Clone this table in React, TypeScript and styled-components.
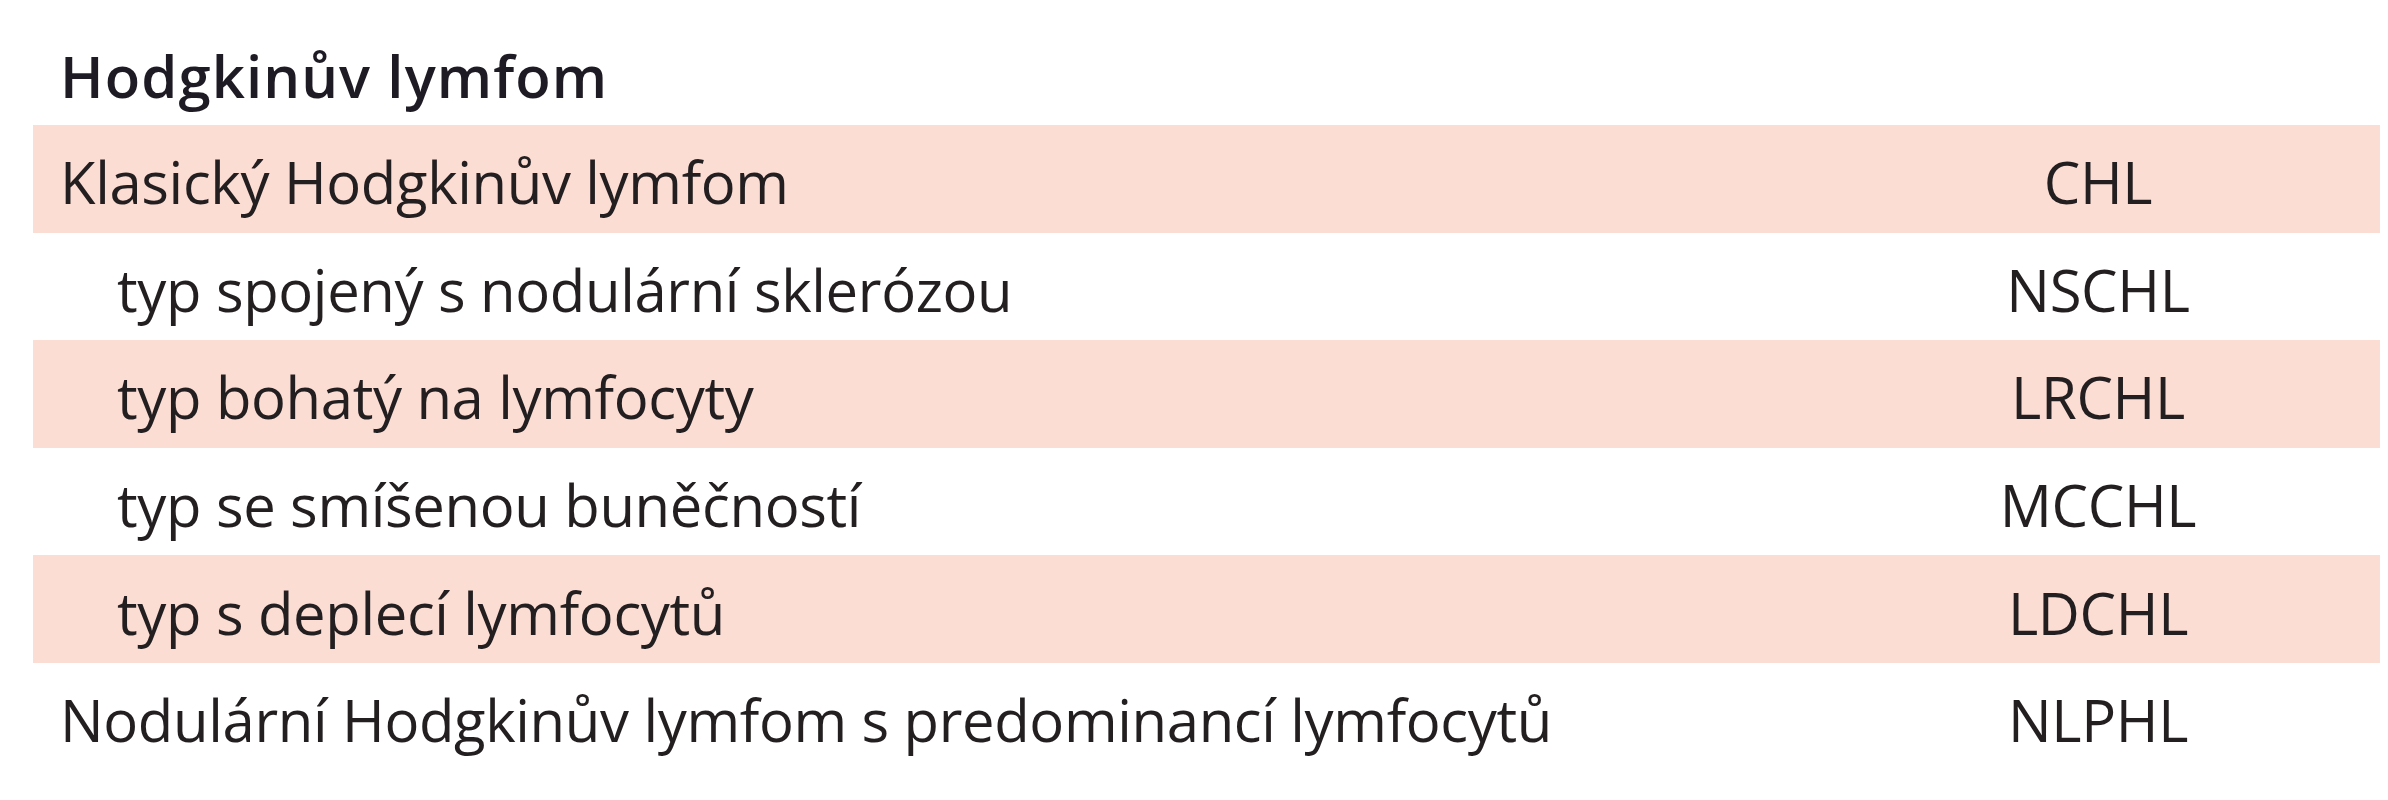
import React from "react";
import styled, { createGlobalStyle } from "styled-components";

const GlobalStyle = createGlobalStyle`
  html, body {
    margin: 0;
    padding: 0;
    background: #ffffff;
  }
  body {
    font-family: "Open Sans", "Noto Sans", "Liberation Sans", sans-serif;
    color: #231f20;
  }
`;

const Table = styled.div`
  margin: 0 8px 0 33px;
  display: flex;
  flex-direction: column;
`;

const Heading = styled.div`
  box-sizing: border-box;
  height: 125px;
  padding: 36px 0 0 27px;
  font-size: 58px;
  line-height: 79px;
  font-weight: 650;
  letter-spacing: 1.1px;
  color: #1f1b24;
`;

const Row = styled.div<{ $shaded: boolean }>`
  box-sizing: border-box;
  height: 107.6px;
  padding-top: 6px;
  display: grid;
  grid-template-columns: 1fr 564px;
  align-items: center;
  background: ${(p) => (p.$shaded ? "#fbddd4" : "transparent")};
  font-size: 58px;
  line-height: 79px;
  letter-spacing: -0.35px;
`;

const Name = styled.div<{ $indent: boolean }>`
  padding-left: ${(p) => (p.$indent ? "84px" : "27px")};
  white-space: nowrap;
`;

const Code = styled.div`
  text-align: center;
`;

const rows = [
  { name: "Klasický Hodgkinův lymfom", code: "CHL", indent: false },
  { name: "typ spojený s nodulární sklerózou", code: "NSCHL", indent: true },
  { name: "typ bohatý na lymfocyty", code: "LRCHL", indent: true },
  { name: "typ se smíšenou buněčností", code: "MCCHL", indent: true },
  { name: "typ s deplecí lymfocytů", code: "LDCHL", indent: true },
  { name: "Nodulární Hodgkinův lymfom s predominancí lymfocytů", code: "NLPHL", indent: false },
];

export default function App() {
  return (
    <>
      <GlobalStyle />
      <Table>
        <Heading>Hodgkinův lymfom</Heading>
        {rows.map((r, i) => (
          <Row key={r.code} $shaded={i % 2 === 0}>
            <Name $indent={r.indent}>{r.name}</Name>
            <Code>{r.code}</Code>
          </Row>
        ))}
      </Table>
    </>
  );
}
